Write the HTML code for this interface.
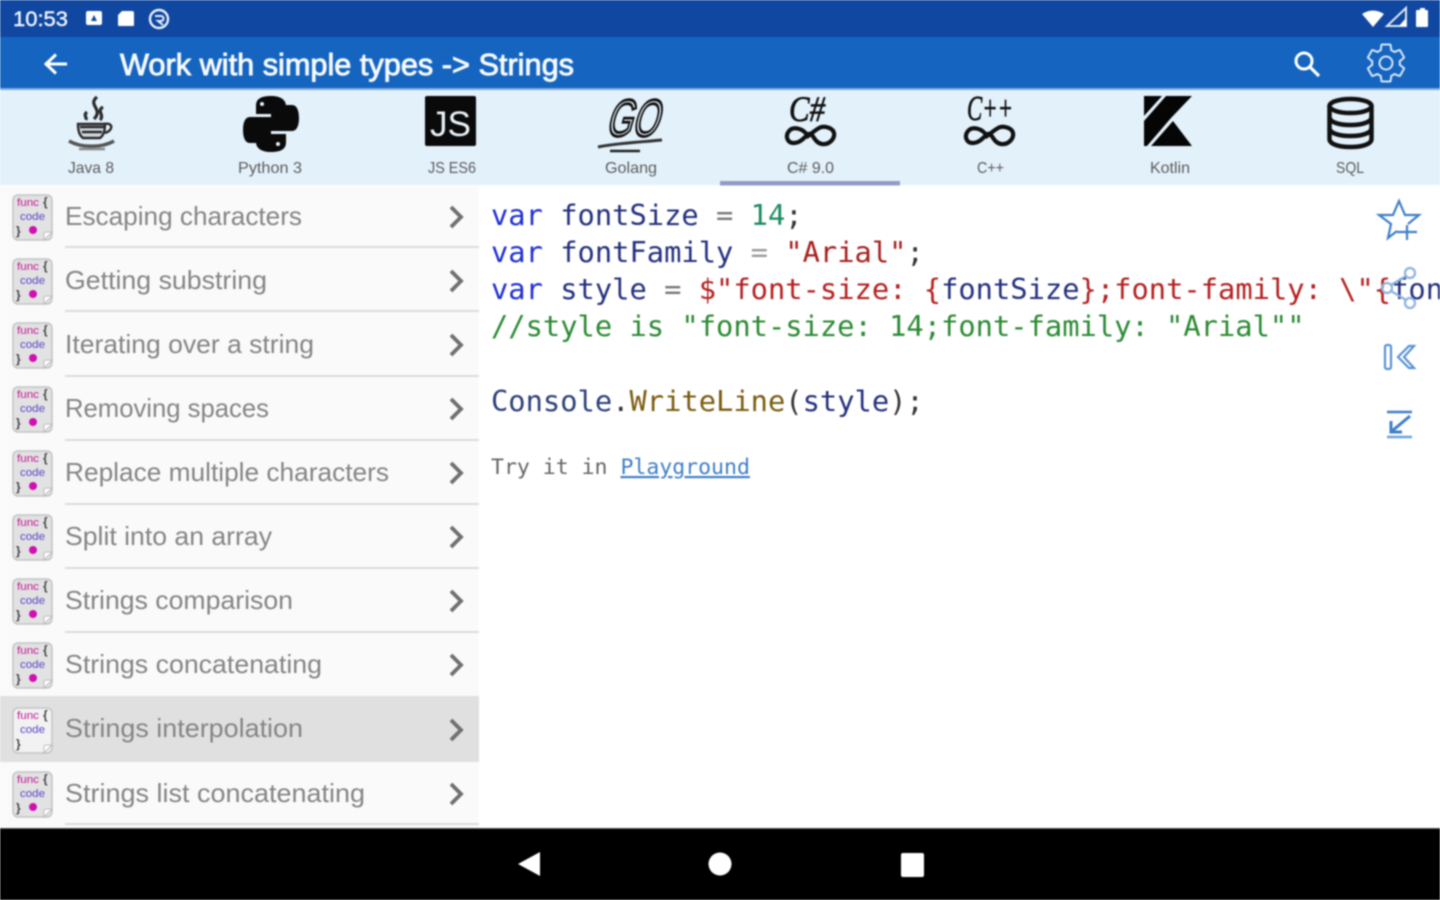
<!DOCTYPE html>
<html lang="en"><head><meta charset="utf-8"><title>Strings</title>
<style>
html,body{margin:0;padding:0;background:#fff;width:1440px;height:900px;overflow:hidden}
svg{display:block;position:absolute;left:0;top:0;filter:blur(.8px)}
text{font-family:"Liberation Sans",sans-serif;white-space:pre}
.l{font-size:26px;fill:#858585}
.t{font-size:16px;fill:#5c5c5c}
.c{font-family:"DejaVu Sans Mono",monospace;font-size:28.75px}
.ic1{font-size:11px;fill:#c2189a;font-family:"Liberation Sans",sans-serif}
.ic2{font-size:11px;fill:#5a45c8;font-family:"Liberation Sans",sans-serif}
</style></head><body>
<svg width="1440" height="900" viewBox="0 0 1440 900" xmlns="http://www.w3.org/2000/svg">
<defs>
<g id="ib">
<rect x="13" y="0" width="39" height="45" rx="5" fill="#e2e2e2" stroke="#c4c4c4" stroke-width="1.5"/>
<path d="M44 45l8-8h-6a2 2 0 0 0-2 2z" fill="#fff" stroke="#bbb"/>
<text x="17" y="11" class="ic1" textLength="22" lengthAdjust="spacingAndGlyphs">func</text>
<text x="43" y="11" font-size="12" font-weight="700" fill="#444">{</text>
<text x="20" y="25" class="ic2" textLength="25" lengthAdjust="spacingAndGlyphs">code</text>
<text x="16" y="40" font-size="12" font-weight="700" fill="#444">}</text>
</g>
<g id="ar"><path d="M0 0l10 10-10 10" fill="none" stroke="#707070" stroke-width="3.8"/></g>
</defs>
<rect width="1440" height="900" fill="#fff"/>
<!-- status bar -->
<rect width="1440" height="37" fill="#0f47a1"/>
<text x="13" y="26" font-size="21" fill="#f2f6fb" textLength="55" lengthAdjust="spacingAndGlyphs" style="stroke:#f2f6fb;stroke-width:.4px">10:53</text>
<rect x="86" y="11" width="16" height="14" rx="2" fill="#fff"/><path d="M91 21l3-6 3 6z" fill="#0f47a1"/>
<path d="M122 11h10a2 2 0 0 1 2 2v12a1 1 0 0 1-1 1h-14a1 1 0 0 1-1-1v-10z" fill="#fff"/>
<circle cx="159" cy="19" r="9" fill="none" stroke="#e6eef8" stroke-width="2.4"/>
<path d="M155 16h6a2 2 0 0 1 0 5h-3l5 4" fill="none" stroke="#e6eef8" stroke-width="2"/>
<path d="M1362 14q11-7 22 0l-11 13z" fill="#fff"/>
<path d="M1387 26h19v-18z" fill="none" stroke="#dfe7f2" stroke-width="2"/><path d="M1399 26h7v-8z" fill="#fff"/>
<path d="M1417 10h3v-2h5v2h2a1 1 0 0 1 1 1v15a1 1 0 0 1-1 1h-10a1 1 0 0 1-1-1v-15a1 1 0 0 1 1-1z" fill="#fff"/>
<!-- toolbar -->
<rect y="37" width="1440" height="51" fill="#1565c0"/>
<rect y="88" width="1440" height="2" fill="#7fa9dc"/>
<path d="M67 64H47M56 54.500l-10 9.500 10 9.500" fill="none" stroke="#fff" stroke-width="3"/>
<text x="120" y="75" font-size="31" fill="#f6f9fd" textLength="454" lengthAdjust="spacingAndGlyphs" style="stroke:#f6f9fd;stroke-width:.9px">Work with simple types -&gt; Strings</text>
<circle cx="1304" cy="61" r="8" fill="none" stroke="#fff" stroke-width="3"/>
<path d="M1310 67l9 9" stroke="#fff" stroke-width="3.200"/>
<g transform="translate(1363.800 40.800) scale(1.85)" fill="none" stroke="#d5e4f5" stroke-width="1.100">
<path d="M19.430 12.980c.04-.32.07-.64.07-.98s-.03-.66-.07-.98l2.110-1.650c.19-.15.24-.42.12-.64l-2-3.460c-.12-.22-.39-.3-.61-.22l-2.490 1c-.52-.4-1.080-.73-1.690-.98l-.38-2.650C14.460 2.180 14.250 2 14 2h-4c-.25 0-.46.18-.49.42l-.38 2.650c-.61.25-1.170.59-1.690.98l-2.490-1c-.23-.09-.49 0-.61.22l-2 3.460c-.13.22-.07.49.12.64l2.110 1.650c-.04.32-.07.65-.07.98s.03.66.07.98l-2.110 1.650c-.19.15-.24.42-.12.64l2 3.460c.12.22.39.3.61.22l2.490-1c.52.4 1.080.73 1.690.98l.38 2.650c.03.24.24.42.49.42h4c.25 0 .46-.18.49-.42l.38-2.650c.61-.25 1.170-.59 1.690-.98l2.490 1c.23.09.49 0 .61-.22l2-3.460c.12-.22.07-.49-.12-.64l-2.110-1.650z"/>
<circle cx="12" cy="12" r="3.500"/></g>
<!-- tabs -->
<rect y="90" width="1440" height="95" fill="#e3f1fb"/>
<rect x="720" y="181" width="180" height="4.500" fill="#8f9cc9"/>
<!-- java -->
<g fill="none" stroke="#2a2a2a">
<path d="M97 97c-10 8 7 12-3 22M103 107c-7 4 2 8-3 13M87 112c-4 3 0 5-1 8" stroke-width="3.200"/>
<path d="M78 124c0 7 2 12 5 14h17c3-2 5-7 5-14z" stroke-width="2.400" fill="#cfd8de"/>
<path d="M80 127h24M82 132h20" stroke-width="2.600"/>
<path d="M104 124c9-2 10 6 1 9" stroke-width="2.400"/>
<path d="M69 141c12 7 33 7 45 0" stroke-width="3.400" stroke="#555"/>
<path d="M79 149h26" stroke-width="2.400" stroke="#8a8a8a"/></g>
<!-- python -->
<path d="M271 96c-13 0-15 5-15 10v8h15v3h-21c-5 0-7 6-7 13s2 13 7 13h6v-9c0-5 4-9 9-9h14c4 0 7-3 7-7v-12c0-6-5-10-15-10z" fill="#0a0a0a"/>
<path d="M271 152c13 0 15-5 15-10v-8h-15v-3h21c5 0 7-6 7-13s-2-13-7-13h-6v9c0 5-4 9-9 9h-14c-4 0-7 3-7 7v12c0 6 5 10 15 10z" fill="#0a0a0a"/>
<circle cx="262" cy="104" r="2" fill="#e3f1fb"/><circle cx="278" cy="144" r="2" fill="#e3f1fb"/>
<!-- js -->
<rect x="425" y="96" width="51" height="50" rx="2" fill="#0a0a0a"/>
<text x="430" y="136" font-size="35" fill="#e8f1f7" textLength="41" lengthAdjust="spacingAndGlyphs">JS</text>
<!-- go -->
<g transform="translate(605 136) skewX(-16)">
<text x="0" y="0" font-size="52" fill="none" stroke="#111" stroke-width="2.800" textLength="52" lengthAdjust="spacingAndGlyphs">GO</text>
</g>
<path d="M598 147c20-4 44-5 64-7" fill="none" stroke="#333" stroke-width="3"/>
<path d="M610 151h30" stroke="#222" stroke-width="2.400"/>
<!-- c# c++ -->
<text x="789" y="121" font-size="36" font-style="italic" fill="#111" style="font-family:'Liberation Serif',serif;stroke:#111;stroke-width:.7px" textLength="36" lengthAdjust="spacingAndGlyphs">C#</text>
<text x="967" y="120" font-size="35" font-style="italic" fill="#111" style="font-family:'Liberation Serif',serif;stroke:#111;stroke-width:.7px" textLength="46" lengthAdjust="spacingAndGlyphs">C++</text>
<path d="M808 136c-5-8-15-10-19-5s-2 12 5 12 11-7 15-9 5 9 13 10 13-6 12-11-10-8-15-5-8 6-11 8z" fill="none" stroke="#111" stroke-width="4.200"/>
<path d="M987 136c-5-8-15-10-19-5s-2 12 5 12 11-7 15-9 5 9 13 10 13-6 12-11-10-8-15-5-8 6-11 8z" fill="none" stroke="#111" stroke-width="4.200"/>
<!-- kotlin -->
<path d="M1144 96h18l-18 20zM1166 96h26l-21 22-24 28h-3v-25zM1173 121l19 25h-41z" fill="#050505"/>
<!-- sql -->
<g fill="none" stroke="#111" stroke-width="4.500">
<ellipse cx="1350.500" cy="106" rx="21" ry="7"/>
<path d="M1329.500 106v33c0 5 9 8 21 8s21-3 21-8v-33"/>
<path d="M1329.500 117c0 5 9 8 21 8s21-3 21-8M1329.500 128c0 5 9 8 21 8s21-3 21-8"/>
</g>
<!-- tab labels -->
<text class="t" x="68" y="173" textLength="46" lengthAdjust="spacingAndGlyphs">Java 8</text>
<text class="t" x="238" y="173" textLength="64" lengthAdjust="spacingAndGlyphs">Python 3</text>
<text class="t" x="428" y="173" textLength="48" lengthAdjust="spacingAndGlyphs">JS ES6</text>
<text class="t" x="605" y="173" textLength="52" lengthAdjust="spacingAndGlyphs">Golang</text>
<text class="t" x="787" y="173" textLength="47" lengthAdjust="spacingAndGlyphs">C# 9.0</text>
<text class="t" x="977" y="173" textLength="27" lengthAdjust="spacingAndGlyphs">C++</text>
<text class="t" x="1150" y="173" textLength="40" lengthAdjust="spacingAndGlyphs">Kotlin</text>
<text class="t" x="1336" y="173" textLength="28" lengthAdjust="spacingAndGlyphs">SQL</text>
<!-- list -->
<rect y="186" width="479" height="642" fill="#fafafa"/>
<rect y="696" width="479" height="66" fill="#e0e0e0"/>
<g fill="#dcdcdc">
<rect x="65" y="246" width="414" height="2"/><rect x="65" y="310" width="414" height="2"/><rect x="65" y="375" width="414" height="2"/><rect x="65" y="439" width="414" height="2"/><rect x="65" y="503" width="414" height="2"/><rect x="65" y="567" width="414" height="2"/><rect x="65" y="631" width="414" height="2"/><rect x="65" y="823" width="414" height="2"/>
</g>
<use href="#ib" y="195"/><circle cx="33" cy="230" r="4" fill="#d011b0"/>
<use href="#ib" y="259"/><circle cx="33" cy="294" r="4" fill="#d011b0"/>
<use href="#ib" y="323"/><circle cx="33" cy="358" r="4" fill="#d011b0"/>
<use href="#ib" y="387"/><circle cx="33" cy="422" r="4" fill="#d011b0"/>
<use href="#ib" y="451"/><circle cx="33" cy="486" r="4" fill="#d011b0"/>
<use href="#ib" y="515"/><circle cx="33" cy="550" r="4" fill="#d011b0"/>
<use href="#ib" y="579"/><circle cx="33" cy="614" r="4" fill="#d011b0"/>
<use href="#ib" y="643"/><circle cx="33" cy="678" r="4" fill="#d011b0"/>
<g transform="translate(0 708)"><rect x="13" y="0" width="39" height="45" rx="5" fill="#f2f2f2" stroke="#c4c4c4" stroke-width="1.500"/><path d="M44 45l8-8h-6a2 2 0 0 0-2 2z" fill="#fff" stroke="#bbb"/><text x="17" y="11" class="ic1" textLength="22" lengthAdjust="spacingAndGlyphs">func</text><text x="43" y="11" font-size="12" font-weight="700" fill="#444">{</text><text x="20" y="25" class="ic2" textLength="25" lengthAdjust="spacingAndGlyphs">code</text><text x="16" y="40" font-size="12" font-weight="700" fill="#444">}</text></g>
<use href="#ib" y="772"/><circle cx="33" cy="807" r="4" fill="#d011b0"/>
<text class="l" x="65" y="225" textLength="237" lengthAdjust="spacingAndGlyphs">Escaping characters</text>
<text class="l" x="65" y="289" textLength="202" lengthAdjust="spacingAndGlyphs">Getting substring</text>
<text class="l" x="65" y="353" textLength="249" lengthAdjust="spacingAndGlyphs">Iterating over a string</text>
<text class="l" x="65" y="417" textLength="204" lengthAdjust="spacingAndGlyphs">Removing spaces</text>
<text class="l" x="65" y="481" textLength="324" lengthAdjust="spacingAndGlyphs">Replace multiple characters</text>
<text class="l" x="65" y="545" textLength="207" lengthAdjust="spacingAndGlyphs">Split into an array</text>
<text class="l" x="65" y="609" textLength="228" lengthAdjust="spacingAndGlyphs">Strings comparison</text>
<text class="l" x="65" y="673" textLength="257" lengthAdjust="spacingAndGlyphs">Strings concatenating</text>
<text class="l" x="65" y="737" textLength="238" lengthAdjust="spacingAndGlyphs">Strings interpolation</text>
<text class="l" x="65" y="802" textLength="300" lengthAdjust="spacingAndGlyphs">Strings list concatenating</text>
<use href="#ar" x="451" y="207"/><use href="#ar" x="451" y="271"/><use href="#ar" x="451" y="335"/><use href="#ar" x="451" y="399"/><use href="#ar" x="451" y="463"/><use href="#ar" x="451" y="527"/><use href="#ar" x="451" y="591"/><use href="#ar" x="451" y="655"/><use href="#ar" x="451" y="720"/><use href="#ar" x="451" y="784"/>
<!-- code -->
<text class="c" x="491" y="225"><tspan fill="#1f2fd0">var</tspan><tspan fill="#23307e"> fontSize</tspan><tspan fill="#777"> = </tspan><tspan fill="#1c8a60">14</tspan><tspan fill="#333">;</tspan></text>
<text class="c" x="491" y="262"><tspan fill="#1f2fd0">var</tspan><tspan fill="#23307e"> fontFamily </tspan><tspan fill="#999">= </tspan><tspan fill="#a82020">"Arial"</tspan><tspan fill="#333">;</tspan></text>
<text class="c" x="491" y="299"><tspan fill="#1f2fd0">var</tspan><tspan fill="#23307e"> style </tspan><tspan fill="#777">= </tspan><tspan fill="#b52020">$"font-size: {</tspan><tspan fill="#23307e">fontSize</tspan><tspan fill="#b52020">};font-family: \"{</tspan><tspan fill="#23307e">fon</tspan></text>
<text class="c" x="491" y="336" fill="#2b8a33">//style is "font-size: 14;font-family: "Arial""</text>
<text class="c" x="491" y="411"><tspan fill="#2b3f7a">Console</tspan><tspan fill="#333">.</tspan><tspan fill="#7a5c10">WriteLine</tspan><tspan fill="#333">(</tspan><tspan fill="#23307e">style</tspan><tspan fill="#333">);</tspan></text>
<text x="491" y="474" style="font-family:'DejaVu Sans Mono',monospace;font-size:21.5px" fill="#666">Try it in <tspan fill="#3f7fc8" text-decoration="underline">Playground</tspan></text>
<!-- right icons -->
<g fill="none" stroke="#3f7fcb" stroke-width="2.200">
<path d="M1397 231l-9 7 3-14-12-9h14l6-14 6 14h14l-11 9"/>
<path d="M1407 225v15M1397 232h20"/>
<circle cx="1410" cy="273" r="5" stroke="#8db2e0"/><circle cx="1410" cy="303" r="5" stroke="#8db2e0"/><circle cx="1387" cy="288" r="5" stroke="#8db2e0"/>
<path d="M1391 285l15-9M1391 291l15 9" stroke="#8db2e0"/>
<rect x="1385" y="345" width="6" height="24" rx="2" stroke="#5a92d6"/>
<path d="M1414 346h-5l-11 11 11 11h5l-10-11z" stroke="#5a92d6"/>
<path d="M1387 412h25" stroke-width="2.600"/><path d="M1387 437h25" stroke="#6fa0dc" stroke-width="2.600"/>
<path d="M1410 416l-18 15M1391 421v11h11" stroke-width="3"/>
</g>
<!-- nav -->
<rect y="828" width="1440" height="72" fill="#000"/>
<rect y="828" width="1440" height="1" fill="#555"/>
<path d="M518 864l22-12v24z" fill="#fff"/>
<circle cx="720" cy="864" r="11.500" fill="#fff"/>
<rect x="901" y="853" width="23" height="24" rx="2" fill="#fff"/>
</svg>
</body></html>
